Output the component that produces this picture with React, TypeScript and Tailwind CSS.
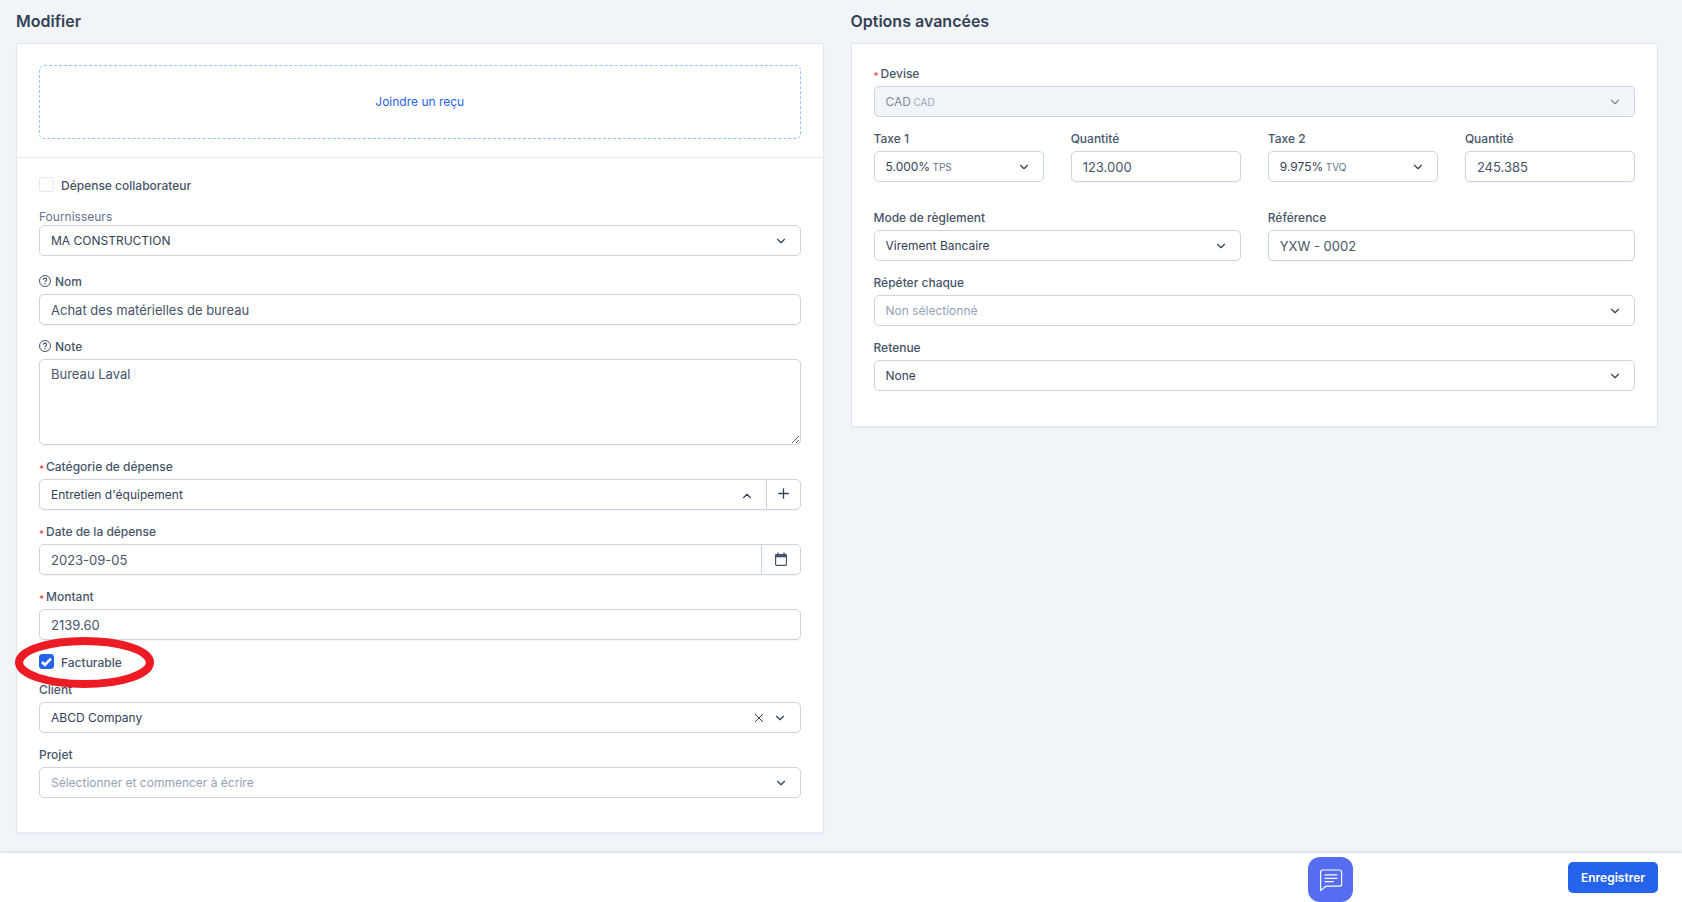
import React, { useState } from 'react';
import { ChevronDown, ChevronUp } from 'lucide-react';

const labelClass = 'flex h-5 mb-0.5 items-center text-xs font-medium text-[#475569]';
const boxClass =
   'flex h-[31px] w-full items-center rounded-[5px] border border-[#cbd5e1] text-xs text-[#334155]';
const inputClass =
   'h-[31px] w-full rounded-[5px] border border-[#cbd5e1] bg-white px-[11px] text-[13px] text-[#475569] shadow-xs outline-none';

interface LabelProps {
   htmlFor: string;
   text: string;
   required?: boolean;
   help?: boolean;
}

const Label = ({ htmlFor, text, required, help }: LabelProps) => (
   <label htmlFor={htmlFor} className={labelClass}>
      {required && (
         <span className="w-[7px] pt-1 text-[10px] leading-none text-[#ef4444]">*</span>
      )}
      {help && <HelpIcon />}
      {text}
   </label>
);

const HelpIcon = () => (
   <svg
      className="-mt-0.5 mr-1 size-3 shrink-0"
      viewBox="0 0 12 12"
      fill="none"
      stroke="currentColor"
      strokeWidth="1"
   >
      <circle cx="6" cy="6" r="5.5" />
      <path d="M4.4 4.8a1.6 1.5 0 1 1 2.3 1.2c-.5.3-.7.5-.7 1.1" strokeWidth="1.2" />
      <path d="M6 8v1.2" strokeWidth="1.2" />
   </svg>
);

interface SelectProps {
   id: string;
   value: string;
   suffix?: string;
   placeholder?: boolean;
   disabled?: boolean;
}

const Select = ({ id, value, suffix, placeholder, disabled }: SelectProps) => (
   <div className={`${boxClass} pl-[11px] pr-3 ${disabled ? 'bg-[#f1f5f9]' : 'bg-white'}`}>
      <div className={`flex h-full flex-1 items-center ${disabled ? 'opacity-60' : ''}`}>
         <select
            id={id}
            disabled={disabled}
            className={`h-full appearance-none outline-none ${suffix ? '' : 'min-w-0 flex-1'} ${
               placeholder ? 'text-[#94a3b8]' : ''
            }`}
         >
            <option>{value}</option>
         </select>
         {suffix && <span className="ml-0.5 pt-0.5 text-[10px] text-[#64748b]">{suffix}</span>}
         <ChevronDown className="pointer-events-none ml-auto size-[14px]" />
      </div>
   </div>
);

const CheckIcon = () => (
   <svg className="pointer-events-none col-start-1 row-start-1 size-[11px]" viewBox="0 0 11 11">
      <path d="M1 6 3.9 8.8 10 2.6" fill="none" stroke="white" strokeWidth="2.6" />
   </svg>
);

interface CheckboxProps {
   id: string;
   text: string;
   checked: boolean;
   onChange: () => void;
}

const Checkbox = ({ id, text, checked, onChange }: CheckboxProps) => (
   <div className="flex h-[15px] items-center">
      <span className="grid place-items-center">
         <input
            id={id}
            type="checkbox"
            checked={checked}
            onChange={onChange}
            className="col-start-1 row-start-1 size-[15px] appearance-none rounded-[3px] border border-[#e2e8f0] bg-white checked:border-[#2563eb] checked:bg-[#2563eb]"
         />
         {checked && <CheckIcon />}
      </span>
      <label htmlFor={id} className="pl-[7px] pt-0.5 text-xs font-medium text-[#475569]">
         {text}
      </label>
   </div>
);

const ExpenseForm = () => {
   const [collaborator, setCollaborator] = useState<boolean>(false);
   const [billable, setBillable] = useState<boolean>(true);

   return (
      <div className="rounded-xs border border-[#e2e8f0] bg-white shadow-xs">
         {/* Receipt */}
         <div className="border-b border-[#e2e8f0] px-[22px] pt-[21px] pb-[18px]">
            <button className="h-[74px] w-full rounded-[5px] border border-dashed border-[#93c5fd] text-xs text-[#2563eb]">
               Joindre un reçu
            </button>
         </div>
         <div className="px-[22px] pt-[19px] pb-[34px]">
            <Checkbox
               id="collaborator"
               text="Dépense collaborateur"
               checked={collaborator}
               onChange={() => setCollaborator(!collaborator)}
            />
            <div className="mt-[17px]">
               <label htmlFor="supplier" className="block text-xs text-[#64748b]">
                  Fournisseurs
               </label>
               <Select id="supplier" value="MA CONSTRUCTION" />
            </div>
            <div className="mt-4">
               <Label htmlFor="name" text="Nom" help />
               <input id="name" className={inputClass} defaultValue="Achat des matérielles de bureau" />
            </div>
            <div className="mt-3">
               <Label htmlFor="note" text="Note" help />
               <textarea
                  id="note"
                  className="block h-[86px] w-full rounded-[5px] border border-[#cbd5e1] px-[11px] py-1 text-[13px] leading-5 text-[#475569] shadow-xs outline-none"
                  defaultValue="Bureau Laval"
               />
            </div>
            <div className="mt-3">
               <Label htmlFor="category" text="Catégorie de dépense" required />
               <div className={`${boxClass} shadow-xs`}>
                  <select
                     id="category"
                     className="h-full min-w-0 flex-1 appearance-none pl-[11px] outline-none"
                  >
                     <option>Entretien d'équipement</option>
                  </select>
                  <ChevronUp className="pointer-events-none mr-3 mt-0.5 size-[14px]" />
                  <button
                     aria-label="Ajouter une catégorie"
                     className="flex h-full w-[34px] items-center justify-center border-l border-[#cbd5e1] pb-0.5"
                  >
                     <svg className="size-[11px]" viewBox="0 0 11 11" stroke="currentColor" strokeWidth="1.3">
                        <path d="M5.5 .3v10.4M.3 5.5h10.4" />
                     </svg>
                  </button>
               </div>
            </div>
            <div className="mt-3">
               <Label htmlFor="date" text="Date de la dépense" required />
               <div className={`${boxClass} shadow-xs`}>
                  <input
                     id="date"
                     className="h-full min-w-0 flex-1 pl-[11px] text-[13px] text-[#475569] outline-none"
                     defaultValue="2023-09-05"
                  />
                  <button
                     aria-label="Calendrier"
                     className="flex h-full w-[39px] items-center justify-center border-l border-[#cbd5e1] pb-0.5 text-[#475569]"
                  >
                     <svg className="size-[14px]" viewBox="0 0 14 14" fill="none" stroke="currentColor">
                        <rect x="1.6" y="2.6" width="10.8" height="10.8" rx="1" strokeWidth="1.2" />
                        <path d="M1 3.8h12" strokeWidth="3" />
                        <path d="M4 .6v2.4M10 .6v2.4" strokeWidth="1.4" />
                     </svg>
                  </button>
               </div>
            </div>
            <div className="mt-3">
               <Label htmlFor="amount" text="Montant" required />
               <input id="amount" className={inputClass} defaultValue="2139.60" />
            </div>
            <div className="relative mt-[14px]">
               <Checkbox
                  id="billable"
                  text="Facturable"
                  checked={billable}
                  onChange={() => setBillable(!billable)}
               />
               {/* Highlight ring */}
               <svg
                  className="pointer-events-none absolute -left-6 -top-[17px] h-[51px] w-[139px]"
                  viewBox="0 0 139 51"
               >
                  <ellipse cx="69.5" cy="25.5" rx="65.5" ry="21.5" fill="none" stroke="#ed1c24" strokeWidth="8" />
               </svg>
            </div>
            <div className="mt-[11px]">
               <Label htmlFor="client" text="Client" />
               <div className={`${boxClass} pr-[13px]`}>
                  <select
                     id="client"
                     className="h-full min-w-0 flex-1 appearance-none pl-[11px] outline-none"
                  >
                     <option>ABCD Company</option>
                  </select>
                  <button aria-label="Effacer" className="mr-2 p-px">
                     <svg className="size-[10px]" viewBox="0 0 10 10" stroke="currentColor" strokeWidth="1">
                        <path d="M1 1l8 8M9 1l-8 8" />
                     </svg>
                  </button>
                  <ChevronDown className="pointer-events-none size-[14px]" />
               </div>
            </div>
            <div className="mt-3">
               <Label htmlFor="project" text="Projet" />
               <Select id="project" value="Sélectionner et commencer à écrire" placeholder />
            </div>
         </div>
      </div>
   );
};

const AdvancedOptions = () => (
   <div className="rounded-xs border border-[#e2e8f0] bg-white px-[22px] pt-5 pb-[35px] shadow-xs">
      <Label htmlFor="currency" text="Devise" required />
      <Select id="currency" value="CAD" suffix="CAD" disabled />
      <div className="mt-3 grid grid-cols-4 gap-x-[27px]">
         <div>
            <Label htmlFor="tax1" text="Taxe 1" />
            <Select id="tax1" value="5.000%" suffix="TPS" />
         </div>
         <div>
            <Label htmlFor="qty1" text="Quantité" />
            <input id="qty1" className={inputClass} defaultValue="123.000" />
         </div>
         <div>
            <Label htmlFor="tax2" text="Taxe 2" />
            <Select id="tax2" value="9.975%" suffix="TVQ" />
         </div>
         <div>
            <Label htmlFor="qty2" text="Quantité" />
            <input id="qty2" className={inputClass} defaultValue="245.385" />
         </div>
      </div>
      <div className="mt-[26px] grid grid-cols-2 gap-x-[27px]">
         <div>
            <Label htmlFor="payment" text="Mode de règlement" />
            <Select id="payment" value="Virement Bancaire" />
         </div>
         <div>
            <Label htmlFor="reference" text="Référence" />
            <input id="reference" className={inputClass} defaultValue="YXW - 0002" />
         </div>
      </div>
      <div className="mt-3">
         <Label htmlFor="repeat" text="Répéter chaque" />
         <Select id="repeat" value="Non sélectionné" placeholder />
      </div>
      <div className="mt-3">
         <Label htmlFor="withholding" text="Retenue" />
         <Select id="withholding" value="None" />
      </div>
   </div>
);

const App = () => {
   return (
      <div className="flex min-h-screen flex-col bg-[#f1f5f9] font-['Inter',sans-serif]">
         <main className="grid grid-cols-2 items-start gap-x-[27px] pl-4 pr-6 pb-5">
            <section>
               <h2 className="mb-0.5 flex h-[41px] items-center text-base font-semibold text-[#334155]">
                  Modifier
               </h2>
               <ExpenseForm />
            </section>
            <section>
               <h2 className="mb-0.5 flex h-[41px] items-center text-base font-semibold text-[#334155]">
                  Options avancées
               </h2>
               <AdvancedOptions />
            </section>
         </main>
         <footer className="mt-auto flex justify-end bg-white py-[9px] pr-6 shadow-[0_0_4px_rgba(15,23,42,0.2)]">
            <button className="h-[31px] rounded-[5px] bg-[#2563eb] px-[13px] text-xs font-semibold text-white">
               Enregistrer
            </button>
         </footer>
         {/* Chat widget */}
         <button
            aria-label="Chat"
            className="fixed bottom-0 right-[329px] flex size-[45px] items-center justify-center rounded-xl bg-[#566df1]"
         >
            <svg
               className="size-6"
               viewBox="0 0 24 24"
               fill="none"
               stroke="white"
               strokeWidth="1.2"
               strokeLinejoin="round"
            >
               <path d="M1.6 22.6V4a2 2 0 0 1 2-2h17a2 2 0 0 1 2 2v12.2a2 2 0 0 1-2 2H6.8z" />
               <path d="M5.5 6.9h12.8M5.5 10.3h12.8M5.5 13.7h9.3" />
            </svg>
         </button>
      </div>
   );
};

export default App;
